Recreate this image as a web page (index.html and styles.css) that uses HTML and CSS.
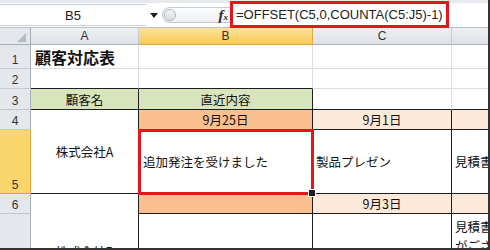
FILE: index.html
```html
<!DOCTYPE html>
<html lang="ja">
<head>
    <meta charset="UTF-8">
    <meta name="viewport" content="width=device-width, initial-scale=1.0">
    <title>顧客対応表</title>
    <link rel="stylesheet" href="styles.css">
</head>
<body>
    <div class="window">
        <div class="formula-bar">
            <div class="name-box">B5</div>
            <div class="name-arrow">
                <svg width="8" height="5" viewBox="0 0 8 5"><path d="M0 0h8L4 5z" fill="#222"/></svg>
            </div>
            <div class="func-band">
                <span class="knob"></span>
                <span class="fx"><i>f</i><span>x</span></span>
            </div>
            <div class="formula-field">
                <div class="formula-text">=OFFSET(C5,0,COUNTA(C5:J5)-1)</div>
            </div>
        </div>

        <div class="sheet">
            <div class="corner">
                <svg width="9" height="9" viewBox="0 0 9 9"><path d="M9 0v9H0z" fill="#b7bcc4"/></svg>
            </div>
            <div class="col-head">A</div>
            <div class="col-head selected">B</div>
            <div class="col-head">C</div>
            <div class="col-head"></div>

            <div class="row-head">1</div>
            <div class="cell title">顧客対応表</div>
            <div class="cell"></div>
            <div class="cell"></div>
            <div class="cell"></div>

            <div class="row-head">2</div>
            <div class="cell dark-bottom"></div>
            <div class="cell dark-bottom"></div>
            <div class="cell"></div>
            <div class="cell"></div>

            <div class="row-head">3</div>
            <div class="cell center green dark-right dark-bottom">顧客名</div>
            <div class="cell center green dark-right dark-bottom">直近内容</div>
            <div class="cell dark-bottom"></div>
            <div class="cell dark-bottom"></div>

            <div class="row-head">4</div>
            <div class="cell center merged dark-right dark-bottom">株式会社A</div>
            <div class="cell center orange dark-right dark-bottom">9月25日</div>
            <div class="cell center peach dark-right dark-bottom">9月1日</div>
            <div class="cell peach dark-right dark-bottom"></div>

            <div class="row-head selected">5</div>
            <div class="cell active dark-right dark-bottom">追加発注を受けました</div>
            <div class="cell dark-right dark-bottom">製品プレゼン</div>
            <div class="cell dark-right dark-bottom">見積書提出</div>

            <div class="row-head">6</div>
            <div class="cell center merged dark-right">株式会社B</div>
            <div class="cell orange dark-right dark-bottom"></div>
            <div class="cell center peach dark-right dark-bottom">9月3日</div>
            <div class="cell peach dark-right dark-bottom"></div>

            <div class="row-head"></div>
            <div class="cell dark-right"></div>
            <div class="cell dark-right"></div>
            <div class="cell wrap dark-right">見積書の再発行依頼がございました</div>
        </div>
    </div>
</body>
</html>
```

FILE: styles.css
```css
* {
    box-sizing: border-box;
}

body {
    margin: 0;
    width: 490px;
    height: 250px;
    overflow: hidden;
    background: #fff;
    font-family: "Noto Sans CJK JP", "Noto Sans", sans-serif;
    color: #111;
}

.window {
    width: 490px;
    height: 250px;
    display: flex;
    flex-direction: column;
    overflow: hidden;
    border-right: 2px solid #333;
    border-bottom: 2px solid #333;
}

/* formula bar */

.formula-bar {
    flex: none;
    height: 28px;
    display: flex;
    align-items: center;
    background: linear-gradient(#e6e9ed 0 3px, #fff 3px);
    border-bottom: 1px solid #b9bfc8;
}

.name-box {
    width: 146px;
    height: 22px;
    margin-top: 3px;
    display: flex;
    align-items: center;
    justify-content: center;
    font-family: "Liberation Sans", sans-serif;
    font-size: 13px;
    color: #222;
    border-top: 1px solid #c9ced5;
    border-bottom: 1px solid #c9ced5;
}

.name-arrow {
    width: 16px;
    display: flex;
    justify-content: center;
    margin-top: 3px;
}

.func-band {
    width: 68px;
    height: 16px;
    margin-top: 3px;
    display: flex;
    align-items: center;
    justify-content: space-between;
    padding: 0 2px 0 1px;
    background: linear-gradient(#fbfcfd, #eceef1);
    border: 1px solid #c4c8ce;
    border-right: none;
    border-radius: 8px 0 0 8px;
}

.knob {
    width: 12px;
    height: 12px;
    border-radius: 50%;
    background: linear-gradient(#f4f5f7, #d9dce0);
    border: 1px solid #b3b8bf;
}

.fx {
    font-family: "Liberation Serif", serif;
    font-size: 15px;
    font-weight: bold;
    color: #2a2a2a;
    line-height: 1;
}

.fx span {
    font-size: 9px;
    font-style: italic;
}

.formula-field {
    flex: 1;
    height: 100%;
    padding-top: 1px;
}

.formula-text {
    width: 219px;
    height: 27px;
    padding-left: 3px;
    display: flex;
    align-items: center;
    border: 3px solid #e8141c;
    font-family: "Liberation Sans", sans-serif;
    font-size: 13px;
    color: #222;
    white-space: nowrap;
}

/* sheet grid */

.sheet {
    flex: 1;
    display: grid;
    grid-template-columns: 31px 108px 174px 139px 120px;
    grid-template-rows: 17px 24px 20px 21px 20px 64px 20px 96px;
    font-size: 12.5px;
}

.corner {
    background: #e4e7eb;
    border-right: 1px solid #a8b0bb;
    border-bottom: 1px solid #a8b0bb;
    display: flex;
    align-items: flex-end;
    justify-content: flex-end;
    padding: 0 4px 2px 0;
}

.corner svg {
    display: block;
}

.col-head {
    background: linear-gradient(#eef0f3, #dde1e6);
    border-right: 1px solid #c6cbd2;
    border-bottom: 1px solid #a8b0bb;
    display: flex;
    align-items: center;
    justify-content: center;
    font-family: "Liberation Sans", sans-serif;
    font-size: 12px;
    color: #333;
}

.col-head.selected {
    background: linear-gradient(#fce39b, #f8ca57);
    border-right-color: #e2a83e;
    border-bottom-color: #e2a83e;
}

.row-head {
    background: #e4e7eb;
    border-right: 1px solid #a8b0bb;
    border-bottom: 1px solid #c3c8cf;
    display: flex;
    align-items: flex-end;
    justify-content: center;
    padding-bottom: 1px;
    font-family: "Liberation Sans", sans-serif;
    font-size: 12px;
    line-height: 14px;
    color: #333;
}

.row-head.selected {
    background: #f9d56b;
    border-color: #e2a83e;
}

.cell {
    min-width: 0;
    display: flex;
    align-items: center;
    padding: 0 3px;
    white-space: nowrap;
    border-right: 1px solid #dcdfe2;
    border-bottom: 1px solid #dcdfe2;
}

.cell.center {
    justify-content: center;
}

.cell.title {
    align-items: flex-end;
    padding-left: 4px;
    padding-bottom: 1px;
    font-size: 16px;
    font-weight: bold;
    line-height: 20px;
}

.cell.merged {
    grid-row: span 2;
}

.cell.dark-right {
    border-right-color: #1e1e1e;
}

.cell.dark-bottom {
    border-bottom-color: #1e1e1e;
}

.cell.green {
    background: #d8e4bc;
}

.cell.orange {
    background: #fac090;
}

.cell.peach {
    background: #fde9d9;
}

.cell.active {
    position: relative;
    z-index: 1;
    padding-left: 4px;
    outline: 3px solid #e8141c;
    outline-offset: -2px;
}

.cell.active::after {
    content: "";
    position: absolute;
    right: -4px;
    bottom: -4px;
    width: 6px;
    height: 6px;
    background: #1e1e1e;
    border: 1px solid #fff;
}

.cell.wrap {
    align-items: flex-start;
    white-space: normal;
    padding-top: 3px;
    line-height: 19px;
}
```
